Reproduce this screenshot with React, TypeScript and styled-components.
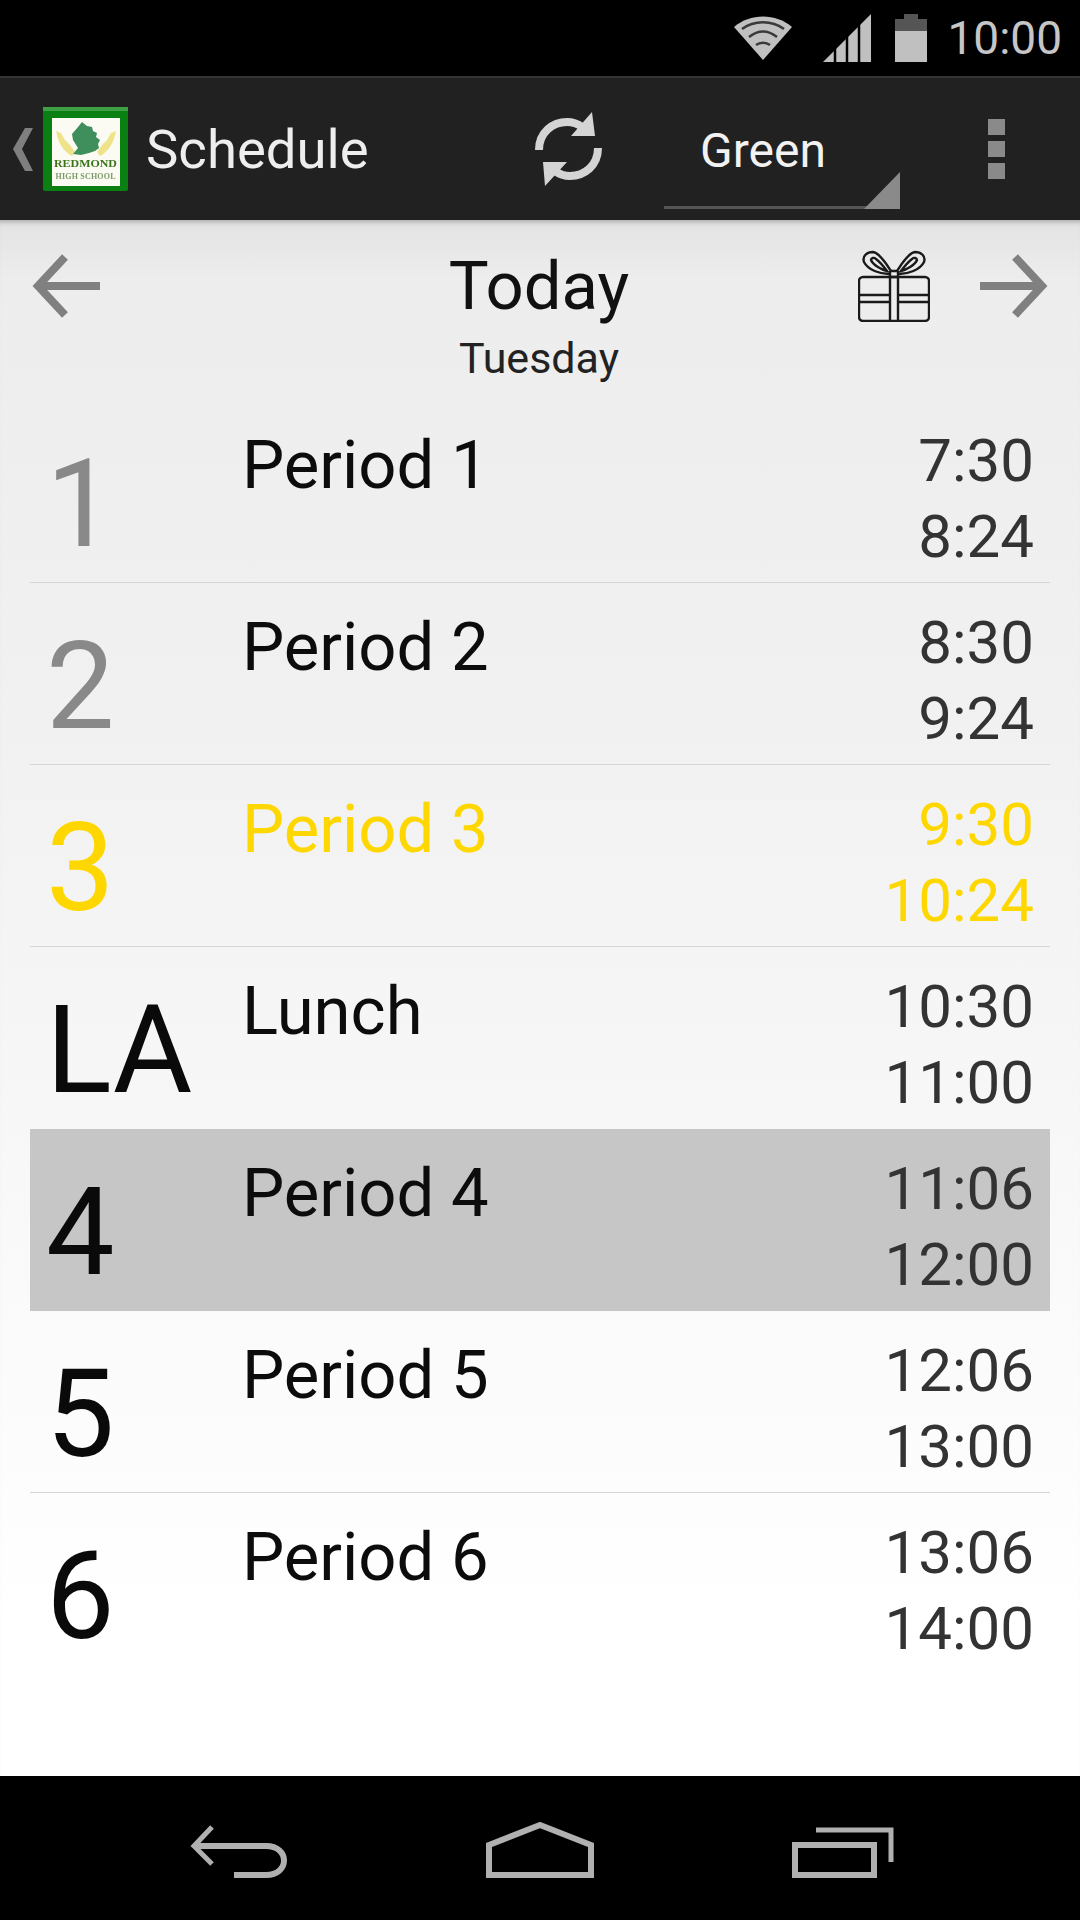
import React from "react";
import styled, { createGlobalStyle } from "styled-components";

const GlobalStyle = createGlobalStyle`
  html, body {
    margin: 0;
    padding: 0;
    background: #000;
  }
  * {
    box-sizing: border-box;
  }
`;

const Screen = styled.div`
  width: 1080px;
  height: 1920px;
  display: flex;
  flex-direction: column;
  overflow: hidden;
  font-family: Roboto, "Liberation Sans", sans-serif;
`;

// BEGIN:: status bar
const StatusBar = styled.div`
  height: 76px;
  flex: none;
  background: #000;
  display: flex;
  align-items: center;
  justify-content: flex-end;
  padding-right: 18px;
`;
const Clock = styled.span`
  color: #c6c6c6;
  font-size: 46px;
  line-height: 78px;
  margin-left: 20px;
`;
const WifiIcon = styled.svg`
  width: 58px;
  height: 44px;
  margin-bottom: 1px;
`;
const SignalIcon = styled.svg`
  width: 48px;
  height: 48px;
  margin-left: 31px;
`;
const BatteryIcon = styled.svg`
  width: 32px;
  height: 48px;
  margin-left: 24px;
`;
// END:: status bar

// BEGIN:: action bar
const ActionBar = styled.div`
  height: 144px;
  flex: none;
  background: #212121;
  border-top: 2px solid #333;
  display: flex;
  align-items: center;
  padding-left: 13px;
`;
const UpChevron = styled.svg`
  width: 20px;
  height: 43px;
`;
const Logo = styled.svg`
  width: 85px;
  height: 84px;
  margin-left: 10px;
  filter: blur(0.6px);
`;
const Title = styled.span`
  color: #eee;
  font-size: 54.5px;
  margin-left: 18px;
  width: 220px;
  white-space: nowrap;
`;
const SyncIcon = styled.svg`
  width: 68px;
  height: 74px;
  margin-left: 169px;
`;
const Spinner = styled.div`
  position: relative;
  width: 236px;
  height: 96px;
  margin-left: 61px;
  margin-top: 24px;
  border-bottom: 3px solid #555;
  color: #f2f2f2;
  font-size: 48px;
  line-height: 76px;
  padding-left: 36px;
  &::after {
    content: "";
    position: absolute;
    right: 0;
    bottom: -3px;
    width: 0;
    height: 0;
    border-left: 36px solid transparent;
    border-bottom: 37px solid #8a8a8a;
  }
`;
const Overflow = styled.div`
  display: flex;
  flex-direction: column;
  gap: 6px;
  margin-left: 88px;
`;
const OverflowDot = styled.span`
  width: 17px;
  height: 16px;
  background: #8a8a8a;
`;
// END:: action bar

const Content = styled.main`
  flex: 1;
  display: flex;
  flex-direction: column;
  background: linear-gradient(#e3e3e3 0, #ededed 60px, #f1f1f1 500px, #ffffff 1400px);
  box-shadow: inset 0 6px 5px -4px rgba(0, 0, 0, 0.25);
`;

const DayHeader = styled.div`
  height: 181px;
  flex: none;
  display: flex;
  align-items: flex-start;
  padding: 34px 32px 0;
`;
const ArrowIcon = styled.svg`
  width: 68px;
  height: 64px;
  flex: none;
`;
const DayLabels = styled.div`
  flex: 1;
  text-align: center;
  margin-left: 120px;
  margin-top: -8px;
`;
const DayName = styled.div`
  color: #111;
  font-size: 67px;
  line-height: 80px;
`;
const DayOfWeek = styled.div`
  color: #222;
  font-size: 43px;
  line-height: 48px;
  margin-top: 8px;
`;
const GiftIcon = styled.svg`
  width: 72px;
  height: 72px;
  flex: none;
  margin: -4px 50px 0 0;
`;

const Rows = styled.div`
  display: flex;
  flex-direction: column;
  padding: 0 30px;
`;

const Row = styled.div<{ $selected?: boolean; $divider: boolean }>`
  height: 182px;
  display: flex;
  padding: 22px 16px 0 0;
  background: ${p => (p.$selected ? "#c6c6c6" : "transparent")};
  border-bottom: 1px solid ${p => (p.$divider ? "#d4d4d4" : "transparent")};
`;
const RowNumber = styled.div<{ $tone: string }>`
  width: 214px;
  flex: none;
  padding-left: 16px;
  color: ${p => p.$tone};
  font-size: 122px;
  line-height: 150px;
  margin-top: 7px;
  white-space: nowrap;
`;
const RowTitle = styled.div<{ $tone?: string }>`
  flex: 1;
  color: ${p => p.$tone || "#0c0c0c"};
  font-size: 67px;
  line-height: 76px;
  margin: 4px 0 0 -2px;
`;
const RowTimes = styled.div<{ $tone?: string }>`
  text-align: right;
  color: ${p => p.$tone || "#333"};
  font-size: 60px;
  line-height: 76px;
`;

// BEGIN:: navigation bar
const NavBar = styled.nav`
  height: 144px;
  flex: none;
  background: #000;
  display: flex;
  align-items: flex-start;
  padding: 46px 0 0 190px;
`;
const NavIcon = styled.svg<{ $gap: number }>`
  flex: none;
  margin-left: ${p => p.$gap}px;
`;
// END:: navigation bar

type Period = {
  mark: string;
  name: string;
  start: string;
  end: string;
  state: "past" | "now" | "selected" | "next";
};

const periods: Period[] = [
  { mark: "1", name: "Period 1", start: "7:30", end: "8:24", state: "past" },
  { mark: "2", name: "Period 2", start: "8:30", end: "9:24", state: "past" },
  { mark: "3", name: "Period 3", start: "9:30", end: "10:24", state: "now" },
  { mark: "LA", name: "Lunch", start: "10:30", end: "11:00", state: "next" },
  { mark: "4", name: "Period 4", start: "11:06", end: "12:00", state: "selected" },
  { mark: "5", name: "Period 5", start: "12:06", end: "13:00", state: "next" },
  { mark: "6", name: "Period 6", start: "13:06", end: "14:00", state: "next" }
];

const YELLOW = "#ffd700";

function markTone(state: Period["state"]): string {
  if (state === "past") return "#898989";
  if (state === "now") return YELLOW;
  return "#0a0a0a";
}

function App(): JSX.Element {
  return (
    <Screen>
      <GlobalStyle />
      <StatusBar>
        <WifiIcon viewBox="0 0 58 44">
          <path d="M0 11C16 -3 42 -3 58 11L29 44Z" fill="#c0c0c0" />
          <path d="M8 13C20 4 38 4 50 13M15 21C24 14 34 14 43 21M22 29C26 26 32 26 36 29" fill="none" stroke="#3a3a3a" strokeWidth="2.5" />
        </WifiIcon>
        <SignalIcon viewBox="0 0 48 48">
          <path d="M0 48L48 0V48Z" fill="#c0c0c0" />
          <path d="M12 30V48M24 20V48M36 8V48" stroke="#000" strokeWidth="2.5" />
        </SignalIcon>
        <BatteryIcon viewBox="0 0 32 48">
          <path d="M0 5H9V0H23V5H32V17H0Z" fill="#555" />
          <rect y="17" width="32" height="31" fill="#c0c0c0" />
        </BatteryIcon>
        <Clock>10:00</Clock>
      </StatusBar>

      <ActionBar>
        <UpChevron viewBox="0 0 20 43">
          <path d="M20 0H12L0 21L12 43H20L9 21Z" fill="#7f7f7f" />
        </UpChevron>
        <Logo viewBox="0 0 85 84">
          <rect width="85" height="84" rx="2" fill="#0a8012" />
          <rect width="85" height="4" fill="#3fa046" />
          <rect x="9" y="11" width="68" height="68" fill="#fbfbf4" />
          <path d="M13 24L18 26L22 33L27 38L32 45L29 49C21 45 15 36 13 24ZM73 24L68 26L64 33L59 38L54 45L57 49C65 45 71 36 73 24Z" fill="#efe38a" />
          <path d="M39 15L44 19L49 20L50 24L54 26L53 30L57 33L55 37L56 41L52 44L46 46L38 48L30 47L35 41L30 33L29 27L35 20Z" fill="#3f8f5c" />
          <text x="42.5" y="60" textAnchor="middle" fontFamily="Liberation Serif, serif" fontWeight="700" fontSize="11" textLength="63" lengthAdjust="spacingAndGlyphs" fill="#3a7418">REDMOND</text>
          <text x="42.5" y="72" textAnchor="middle" fontFamily="Liberation Serif, serif" fontWeight="700" fontSize="8" textLength="60" lengthAdjust="spacing" fill="#7b9a68">HIGH SCHOOL</text>
        </Logo>
        <Title>Schedule</Title>
        <SyncIcon viewBox="0 0 68 74">
          <path d="M4 38C4 20 18 10 32 10C38 10 43 12 47 15" fill="none" stroke="#d4d4d4" strokeWidth="8" />
          <path d="M57 0L60 24L36 24Z" fill="#d4d4d4" />
          <path d="M63 36C63 54 49 64 35 64C29 64 24 62 20 59" fill="none" stroke="#d4d4d4" strokeWidth="8" />
          <path d="M10 74L8 50L32 50Z" fill="#d4d4d4" />
        </SyncIcon>
        <Spinner>Green</Spinner>
        <Overflow>
          <OverflowDot />
          <OverflowDot />
          <OverflowDot />
        </Overflow>
      </ActionBar>

      <Content>
        <DayHeader>
          <ArrowIcon viewBox="0 0 68 64">
            <path d="M68 32H6M33 3L6 32L33 61" fill="none" stroke="#808080" strokeWidth="8" />
          </ArrowIcon>
          <DayLabels>
            <DayName>Today</DayName>
            <DayOfWeek>Tuesday</DayOfWeek>
          </DayLabels>
          <GiftIcon viewBox="0 0 72 72" fill="none" stroke="#1a1a1a" strokeWidth="2.4">
            <rect x="1" y="27" width="70" height="44" rx="4" />
            <path d="M1 45H32M40 45H71M1 52H32M40 52H71M32 21V71M40 21V71M32 21H40M32 27H40" />
            <path d="M31 24C22 24 10 20 6 12C4 6 9 2 15 2C22 3 29 15 33 21" />
            <path d="M41 24C50 24 62 20 66 12C68 6 63 2 57 2C50 3 43 15 39 21" />
            <path d="M29 21C24 20 15 15 13 10C13 8 16 7 18 9C22 12 26 17 29 21Z" />
            <path d="M43 21C48 20 57 15 59 10C59 8 56 7 54 9C50 12 46 17 43 21Z" />
          </GiftIcon>
          <ArrowIcon viewBox="0 0 68 64">
            <path d="M0 32H62M35 3L62 32L35 61" fill="none" stroke="#808080" strokeWidth="8" />
          </ArrowIcon>
        </DayHeader>

        <Rows>
          {periods.map((period, index) => {
            const tone = period.state === "now" ? YELLOW : undefined;
            const nextSelected = periods[index + 1]?.state === "selected";
            const divider = period.state !== "selected" && !nextSelected && index < periods.length - 1;
            return (
              <Row key={period.name} $selected={period.state === "selected"} $divider={divider}>
                <RowNumber $tone={markTone(period.state)}>{period.mark}</RowNumber>
                <RowTitle $tone={tone}>{period.name}</RowTitle>
                <RowTimes $tone={tone}>
                  <div>{period.start}</div>
                  <div>{period.end}</div>
                </RowTimes>
              </Row>
            );
          })}
        </Rows>
      </Content>

      <NavBar>
        <NavIcon $gap={0} width="100" height="56" viewBox="0 0 100 56" fill="none" stroke="#b0b0b0" strokeWidth="6">
          <path d="M22 5L4 24L22 42" strokeWidth="5" />
          <path d="M4 24H76C100 24 100 53 76 53H44" />
        </NavIcon>
        <NavIcon $gap={196} width="108" height="56" viewBox="0 0 108 56" fill="none" stroke="#b0b0b0" strokeWidth="6">
          <path d="M3 23L54 3L105 23V53H3Z" />
        </NavIcon>
        <NavIcon $gap={198} width="102" height="56" viewBox="0 0 102 56" fill="none" stroke="#b0b0b0" strokeWidth="6">
          <rect x="3" y="23" width="79" height="30" />
          <path d="M24 8H99V40" strokeWidth="5" />
        </NavIcon>
      </NavBar>
    </Screen>
  );
}

export default App;
